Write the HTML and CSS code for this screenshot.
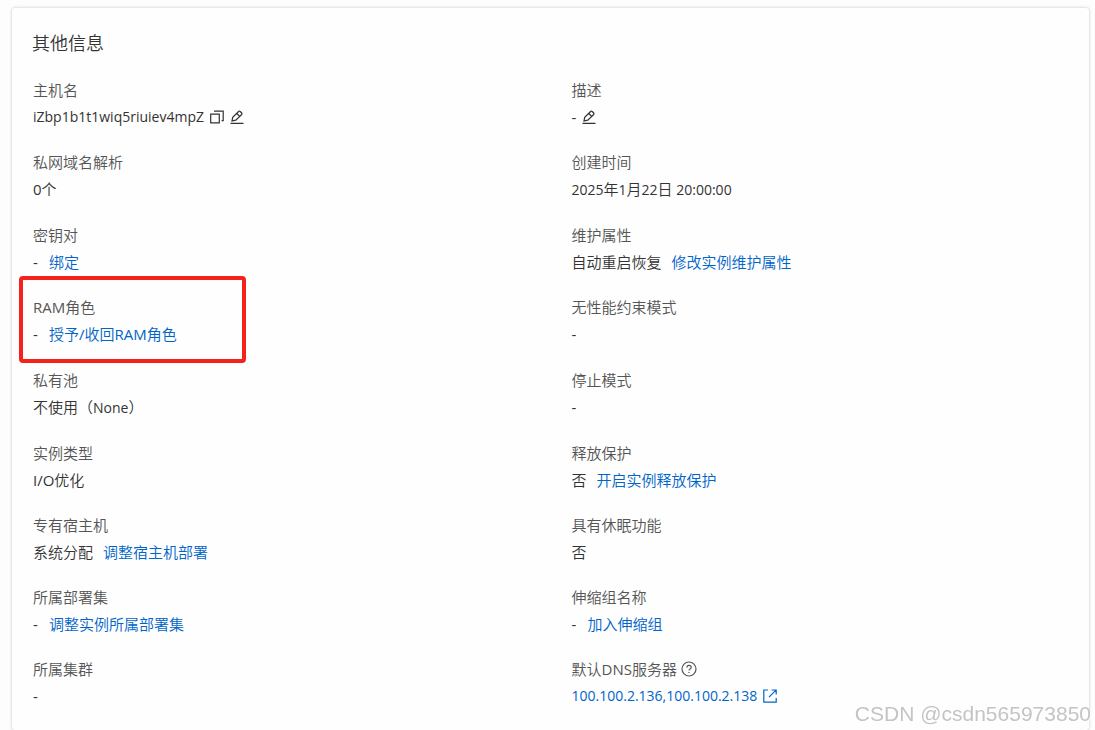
FILE: index.html
```
<!DOCTYPE html>
<html lang="zh-CN">
<head>
    <meta charset="UTF-8">
    <meta name="viewport" content="width=device-width, initial-scale=1.0">
    <title>其他信息</title>
    <link rel="stylesheet" href="styles.css">
</head>
<body>
    <!-- Shared icons -->
    <svg class="sprite" aria-hidden="true">
        <symbol id="icon-edit" viewBox="0 0 14 14">
            <path d="M0.5 13.4H13.5M2 10.9L2.7 7.4L8.6 1.5Q9.4 0.8 10.2 1.5L11.7 3Q12.4 3.8 11.7 4.5L5.8 10.2ZM6.8 3.5L9.5 6.2"/>
        </symbol>
        <symbol id="icon-copy" viewBox="0 0 14 14">
            <path d="M0.7 4.2H9.3V12.9H0.7ZM4 1.2H13.2V10.6H11.6"/>
        </symbol>
    </svg>

    <main class="card">
        <h2>其他信息</h2>
        <dl class="info">
            <div class="item">
                <dt>主机名</dt>
                <dd>
                    <span class="latin">iZbp1b1t1wiq5riuiev4mpZ</span>
                    <button type="button" aria-label="复制"><svg class="icon"><use href="#icon-copy"/></svg></button>
                    <button type="button" aria-label="编辑主机名"><svg class="icon"><use href="#icon-edit"/></svg></button>
                </dd>
            </div>
            <div class="item">
                <dt>描述</dt>
                <dd>
                    <span>-</span>
                    <button type="button" aria-label="编辑描述"><svg class="icon"><use href="#icon-edit"/></svg></button>
                </dd>
            </div>
            <div class="item">
                <dt>私网域名解析</dt>
                <dd><span>0个</span></dd>
            </div>
            <div class="item">
                <dt>创建时间</dt>
                <dd><span class="latin">2025<span class="cjk">年</span>1<span class="cjk">月</span>22<span class="cjk">日</span> 20:00:00</span></dd>
            </div>
            <div class="item">
                <dt>密钥对</dt>
                <dd class="with-link"><span>-</span><a href="#">绑定</a></dd>
            </div>
            <div class="item">
                <dt>维护属性</dt>
                <dd class="with-link"><span>自动重启恢复</span><a href="#">修改实例维护属性</a></dd>
            </div>
            <div class="item marked">
                <dt>RAM角色</dt>
                <dd class="with-link"><span>-</span><a href="#">授予/收回RAM角色</a></dd>
            </div>
            <div class="item">
                <dt>无性能约束模式</dt>
                <dd>-</dd>
            </div>
            <div class="item">
                <dt>私有池</dt>
                <dd><span>不使用（<span class="latin">None</span>）</span></dd>
            </div>
            <div class="item">
                <dt>停止模式</dt>
                <dd>-</dd>
            </div>
            <div class="item">
                <dt>实例类型</dt>
                <dd>I/O优化</dd>
            </div>
            <div class="item">
                <dt>释放保护</dt>
                <dd class="with-link"><span>否</span><a href="#">开启实例释放保护</a></dd>
            </div>
            <div class="item">
                <dt>专有宿主机</dt>
                <dd class="with-link"><span>系统分配</span><a href="#">调整宿主机部署</a></dd>
            </div>
            <div class="item">
                <dt>具有休眠功能</dt>
                <dd>否</dd>
            </div>
            <div class="item">
                <dt>所属部署集</dt>
                <dd class="with-link"><span>-</span><a href="#">调整实例所属部署集</a></dd>
            </div>
            <div class="item">
                <dt>伸缩组名称</dt>
                <dd class="with-link"><span>-</span><a href="#">加入伸缩组</a></dd>
            </div>
            <div class="item">
                <dt>所属集群</dt>
                <dd>-</dd>
            </div>
            <div class="item">
                <dt class="with-help">
                    <span>默认DNS服务器</span>
                    <button type="button" aria-label="帮助">
                        <svg class="icon icon-help" viewBox="0 0 16 16">
                            <circle cx="8" cy="8" r="7"/>
                            <path d="M5.9 6.5Q5.9 4.4 8 4.4Q10.2 4.4 10.2 6.3Q10.2 7.4 9 8.1Q8 8.7 8 9.6M8 10.9V12.1"/>
                        </svg>
                    </button>
                </dt>
                <dd>
                    <a href="#" class="dns latin">100.100.2.136,100.100.2.138
                        <svg class="icon" viewBox="0 0 14 14">
                            <path d="M5 1H0.8V13.2H13.2V9M8.5 1H13.2V5.5M13 1.2L6 8.2"/>
                        </svg>
                    </a>
                </dd>
            </div>
        </dl>
    </main>
    <div class="watermark">CSDN @csdn565973850</div>
</body>
</html>
```
FILE: styles.css
```
*, *::before {
    box-sizing: border-box;
}

body {
    margin: 0;
    padding: 8px 6px 0 12px;
    min-height: 100vh;
    display: flex;
    background: #fdfdfd;
    color: #333;
    font-family: "Open Sans", "Noto Sans CJK SC DemiLight", "Noto Sans CJK SC", sans-serif;
    font-size: 15px;
}

.card {
    flex: 1;
    display: flex;
    flex-direction: column;
    padding: 20px 0;
    background: #fefefe;
    border-radius: 3px;
    box-shadow: 0 0 3px rgba(0, 0, 0, 0.25);
}

h2 {
    margin: 0 0 19px;
    padding-left: 20px;
    font-size: 18px;
    font-weight: 350;
    line-height: 30px;
}

.info {
    flex: 1;
    display: grid;
    grid-template-columns: 1fr 1fr;
    align-content: space-between;
    margin: 0;
}

.item {
    padding-left: 21px;
}

dt, dd {
    margin: 0;
    display: flex;
    align-items: center;
    line-height: 26px;
}

dt {
    color: #555;
}

dd {
    gap: 6px;
    line-height: 28px;
}

.with-link {
    gap: 10px;
}

.with-link span {
    min-width: 6px;
}

.with-help {
    gap: 4px;
}

.latin {
    font-size: 14px;
}

.cjk {
    font-size: 15px;
}

a {
    color: #0064c8;
    text-decoration: none;
}

.dns {
    display: flex;
    align-items: center;
    gap: 6px;
}

button {
    display: flex;
    padding: 0;
    border: none;
    background: none;
    color: inherit;
    cursor: pointer;
}

.sprite {
    position: absolute;
    width: 0;
    height: 0;
}

.icon {
    width: 14px;
    height: 14px;
    fill: none;
    stroke: currentColor;
    stroke-width: 1.2;
}

.icon-help {
    width: 16px;
    height: 16px;
}

/* red frame laid over the RAM role row */
.marked {
    position: relative;
}

.marked::before {
    content: "";
    position: absolute;
    top: -18px;
    left: 7px;
    width: 227px;
    height: 87px;
    border: 4px solid #f5221b;
    border-radius: 4px;
    pointer-events: none;
}

.watermark {
    position: fixed;
    right: 4px;
    bottom: 4px;
    color: #c4c4c4;
    font-family: "Liberation Sans", Arial, sans-serif;
    font-size: 21px;
    line-height: 24px;
    text-shadow: 1px 1px 0 #fff;
}
```
